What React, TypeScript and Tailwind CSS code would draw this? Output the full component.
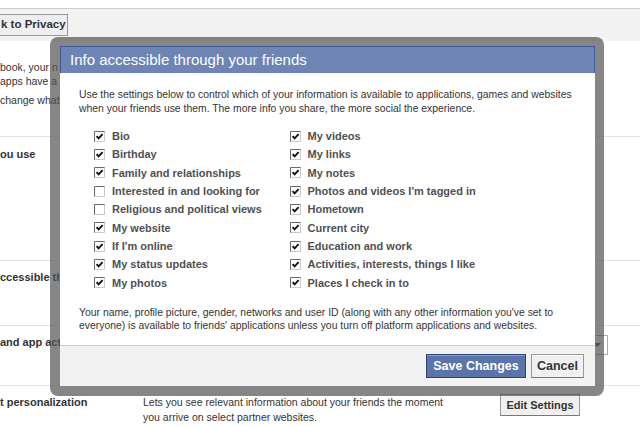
import React from "react";

const leftItems: [string, boolean][] = [
  ["Bio", true],
  ["Birthday", true],
  ["Family and relationships", true],
  ["Interested in and looking for", false],
  ["Religious and political views", false],
  ["My website", true],
  ["If I'm online", true],
  ["My status updates", true],
  ["My photos", true],
];

const rightItems: [string, boolean][] = [
  ["My videos", true],
  ["My links", true],
  ["My notes", true],
  ["Photos and videos I'm tagged in", true],
  ["Hometown", true],
  ["Current city", true],
  ["Education and work", true],
  ["Activities, interests, things I like", true],
  ["Places I check in to", true],
];

function CheckBox({ checked }: { checked: boolean }) {
  return (
    <svg width="11" height="11" viewBox="0 0 11 11" className="shrink-0">
      <rect x="0" y="0" width="11" height="11" fill="#fff" />
      <path d="M0.5 11 V0.5 H11" stroke="#6a6a6a" strokeWidth="1" fill="none" />
      <path d="M0.5 10.5 H10.5 V0.5" stroke="#c9c9c9" strokeWidth="1" fill="none" />
      {checked && (
        <path d="M2.6 5.2 L4.6 7.4 L8.6 3.1" stroke="#111" strokeWidth="1.9" fill="none" />
      )}
    </svg>
  );
}

function Option({ label, checked }: { label: string; checked: boolean }) {
  return (
    <div className="flex items-center gap-[7px] h-[18.33px]">
      <CheckBox checked={checked} />
      <span className="text-[11px] font-bold text-[#505050] leading-[18px] whitespace-nowrap">
        {label}
      </span>
    </div>
  );
}

export default function App() {
  return (
    <div className="relative w-[640px] h-[427px] overflow-hidden bg-white text-[#333] font-['Liberation_Sans',Arial,sans-serif]">
      {/* page behind the dialog, only the part left of it is shown */}
      <div className="h-[8px]" />
      <div className="h-[33px] border-t border-[#cccccc] bg-[#f2f2f2] pt-[5px]">
        <div className="w-[68px] h-[22px] border border-[#999] border-l-0 bg-[#eeeeee] flex items-center pl-[1px]">
          <span className="text-[11.5px] font-bold text-[#333] whitespace-nowrap">k to Privacy</span>
        </div>
      </div>

      <div className="h-[95px] pt-[20px] text-[10.5px] leading-[13.5px] whitespace-nowrap">
        <div>book, your n</div>
        <div>apps have a</div>
        <div className="mt-[6px]">change what</div>
      </div>

      <div className="h-[124px] border-t border-[#e3e3e3] pt-[10px]">
        <div className="text-[11px] font-bold leading-[15px] whitespace-nowrap">ou use</div>
      </div>

      <div className="h-[65px] border-t border-[#e3e3e3] pt-[9px]">
        <div className="text-[11px] font-bold leading-[15px] whitespace-nowrap">ccessible thr</div>
      </div>

      <div className="h-[60px] border-t border-[#e3e3e3] pt-[9px] grid grid-cols-[500px_108px]">
        <div className="text-[11px] font-bold leading-[15px] whitespace-nowrap">and app act</div>
        <div className="h-[20px] border border-[#aaaaaa] bg-white flex items-center justify-end pr-[6px]">
          <svg width="7" height="4" viewBox="0 0 7 4">
            <path d="M0 0 H7 L3.5 4 Z" fill="#555" />
          </svg>
        </div>
      </div>

      <div className="border-t border-[#e3e3e3] pt-[8px] grid grid-cols-[143px_357px_80px]">
        <div className="text-[11px] font-bold leading-[15px] pt-[1px] whitespace-nowrap">t personalization</div>
        <div className="text-[10.5px] leading-[15px] pt-[1px]">
          <div>Lets you see relevant information about your friends the moment</div>
          <div>you arrive on select partner websites.</div>
        </div>
        <div className="h-[22px] border border-[#999] border-b-[#777] bg-[#f0f0f0] flex items-center justify-center">
          <span className="text-[11px] font-bold text-[#333] whitespace-nowrap">Edit Settings</span>
        </div>
      </div>

      {/* dialog */}
      <div className="absolute left-[50px] top-[37px] w-[554px] h-[359px] rounded-[8px] bg-[rgba(82,82,82,0.7)] pl-[10px] pr-[9px] pt-[9px] pb-[10px]">
        <div className="w-full h-full bg-white flex flex-col">
          <div className="h-[27px] bg-[#6d84b4] border border-b-0 border-[#3b5998] pl-[9px]">
            <span className="text-[15px] leading-[25px] text-white whitespace-nowrap">
              Info accessible through your friends
            </span>
          </div>

          <div className="pl-[19px] pt-[15px] text-[10.4px] leading-[13.5px] text-[#333]">
            <div className="whitespace-nowrap">
              Use the settings below to control which of your information is available to applications, games and websites
            </div>
            <div className="whitespace-nowrap">
              when your friends use them. The more info you share, the more social the experience.
            </div>

            <div className="mt-[12px] pl-[15px] grid grid-cols-[195.5px_1fr]">
              <div>
                {leftItems.map(([label, checked]) => (
                  <Option key={label} label={label} checked={checked} />
                ))}
              </div>
              <div>
                {rightItems.map(([label, checked]) => (
                  <Option key={label} label={label} checked={checked} />
                ))}
              </div>
            </div>

            <div className="mt-[14px] whitespace-nowrap">
              Your name, profile picture, gender, networks and user ID (along with any other information you've set to
            </div>
            <div className="whitespace-nowrap">
              everyone) is available to friends' applications unless you turn off platform applications and websites.
            </div>
          </div>

          <div className="flex-1" />

          <div className="h-[41px] border-t border-[#cccccc] bg-[#f2f2f2] flex items-center justify-end gap-[5px] pr-[11px]">
            <div className="w-[100px] h-[24px] bg-[#5b74a8] border border-[#29447e] shadow-[inset_0_1px_0_#8a9cc2] flex items-center justify-center">
              <span className="text-[12.5px] font-bold text-white whitespace-nowrap">Save Changes</span>
            </div>
            <div className="w-[53px] h-[24px] bg-[#f0f0f0] border border-[#999] border-b-[#777] shadow-[inset_0_1px_0_#fff] flex items-center justify-center">
              <span className="text-[12.5px] font-bold text-[#333] whitespace-nowrap">Cancel</span>
            </div>
          </div>
        </div>
      </div>
    </div>
  );
}
